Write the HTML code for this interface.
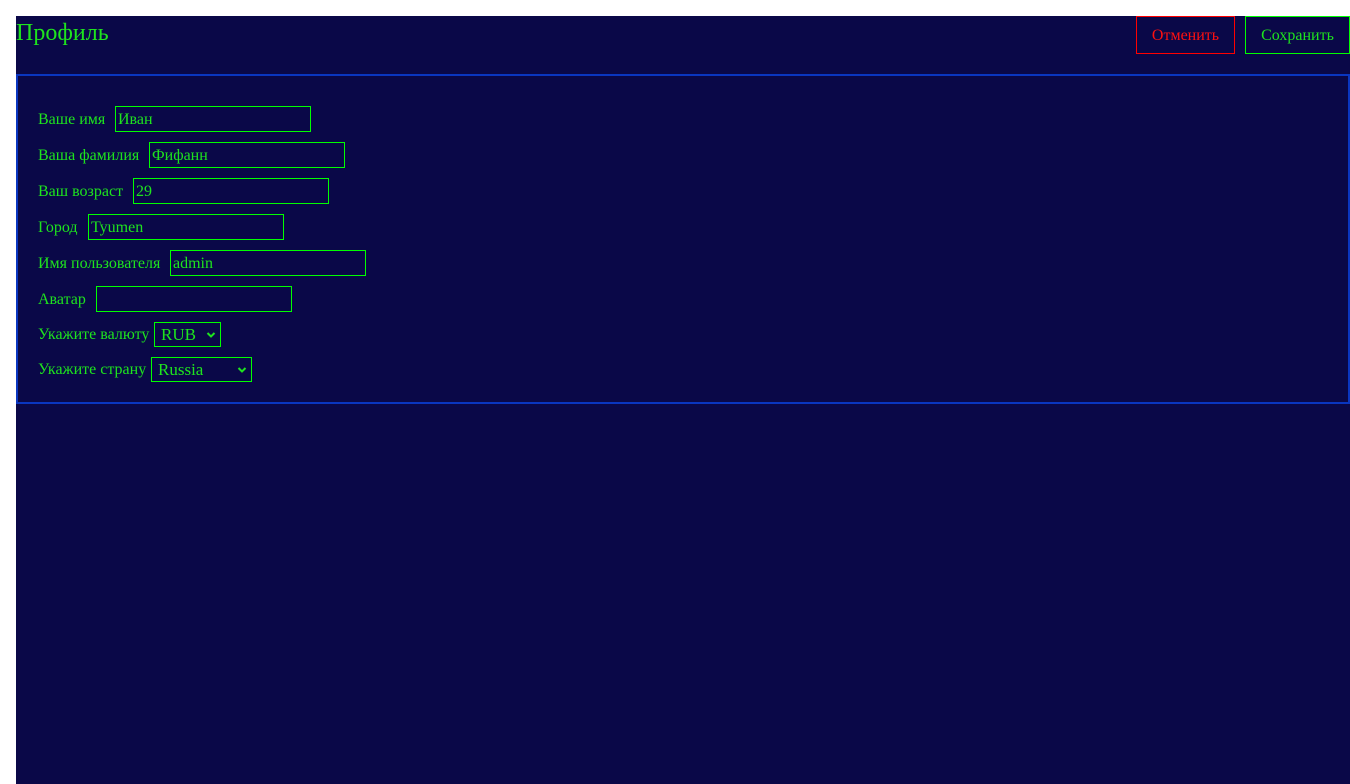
<!DOCTYPE html>
<html><head><meta charset="utf-8"><style>
html,body{margin:0;padding:0;background:#fff;width:1350px;height:784px;overflow:hidden}
*{box-sizing:border-box}
.page{position:absolute;left:16px;top:16px;width:1334px;height:768px;background:#0a0848;font-family:"Liberation Serif",serif;color:#1ee41e}
h1{position:absolute;left:0;top:1px;margin:0;font-weight:normal;font-size:24px;line-height:32px;color:#1ee41e}
.btn{position:absolute;top:0;height:38px;border:1px solid;font-size:16px;line-height:37px;text-align:center}
.panel{position:absolute;left:0;top:58px;width:1334px;height:330px;border:2px solid #0a36c0}
.lbl{position:absolute;left:20px;font-size:16px;line-height:20px}
.inp{position:absolute;width:196px;height:26px;border:1px solid #00ff00;font-size:16px;line-height:25px;padding-left:2px}
.sel{position:absolute;height:25px;border:1px solid #00ff00;font-size:17px;line-height:23px;padding-left:6px}
.sel svg{position:absolute;right:4px;top:9px}
</style></head><body>
<div class="page">
<h1>Профиль</h1>
<div class="btn" style="left:1120px;width:99px;border-color:#ff0000;color:#ff1010">Отменить</div>
<div class="btn" style="left:1229px;width:105px;border-color:#00ff00">Сохранить</div>
<div class="panel">
<div class="lbl" style="top:34px">Ваше имя</div><div class="inp" style="left:97px;top:30px">Иван</div>
<div class="lbl" style="top:70px">Ваша фамилия</div><div class="inp" style="left:131px;top:66px">Фифанн</div>
<div class="lbl" style="top:106px">Ваш возраст</div><div class="inp" style="left:115px;top:102px">29</div>
<div class="lbl" style="top:142px">Город</div><div class="inp" style="left:70px;top:138px">Tyumen</div>
<div class="lbl" style="top:178px">Имя пользователя</div><div class="inp" style="left:152px;top:174px">admin</div>
<div class="lbl" style="top:214px">Аватар</div><div class="inp" style="left:78px;top:210px"></div>
<div class="lbl" style="top:249px">Укажите валюту</div>
<div class="sel" style="left:136px;top:246px;width:67px">RUB<svg width="10" height="6" viewBox="0 0 10 6"><path d="M1.5 1l3.5 3.5 3.5-3.5" stroke="#1ee41e" stroke-width="2" fill="none"/></svg></div>
<div class="lbl" style="top:284px">Укажите страну</div>
<div class="sel" style="left:133px;top:281px;width:101px">Russia<svg width="10" height="6" viewBox="0 0 10 6"><path d="M1.5 1l3.5 3.5 3.5-3.5" stroke="#1ee41e" stroke-width="2" fill="none"/></svg></div>
</div>
</div>
</body></html>
